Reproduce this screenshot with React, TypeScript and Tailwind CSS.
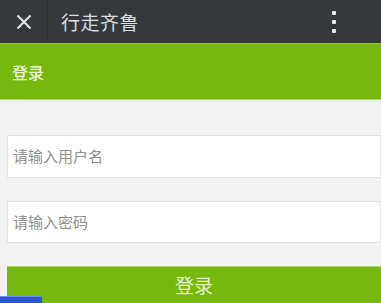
import React from "react";

export default function App() {
  const font = { fontFamily: '"Noto Sans CJK SC", "Noto Sans", sans-serif' };
  return (
    <div className="w-[381px] h-[303px] overflow-hidden bg-[#f2f2f2] relative" style={font}>
      <div className="h-[43px] bg-[#36393c] flex items-center">
        <div className="w-[47px] flex justify-center">
          <svg width="16" height="16" viewBox="0 0 16 16">
            <path d="M1.5 1.5 L14.5 14.5 M14.5 1.5 L1.5 14.5" stroke="#e4e4e4" strokeWidth="2" />
          </svg>
        </div>
        <div className="w-px h-[43px] bg-[#2e3134]" />
        <div className="ml-[13px] text-[19px] leading-none text-[#dcdcdc] tracking-[0.5px]">行走齐鲁</div>
        <div className="ml-auto mr-[45px] flex flex-col gap-[5px] pt-[1px]">
          <div className="w-[4px] h-[4px] bg-[#e8e8e8] rounded-[1px]" />
          <div className="w-[4px] h-[4px] bg-[#e8e8e8] rounded-[1px]" />
          <div className="w-[4px] h-[4px] bg-[#e8e8e8] rounded-[1px]" />
        </div>
      </div>
      <div className="h-[57px] bg-[#77b80e] border-t border-[#8fc83a] border-b border-b-[#a9d66a] flex items-center pl-[12px]">
        <span className="text-[16px] text-[#e9f5d0] font-medium">登录</span>
      </div>
      <div className="pl-[7px] pt-[35px]">
        <div className="h-[43px] bg-white border border-[#e3e3e3] flex items-center pl-[5px]">
          <span className="text-[15px] text-[#8f8f8f]">请输入用户名</span>
        </div>
        <div className="mt-[23px] h-[42px] bg-white border border-[#e3e3e3] flex items-center pl-[5px]">
          <span className="text-[15px] text-[#8f8f8f]">请输入密码</span>
        </div>
        <div className="mt-[23px] h-[40px] bg-[#77b80e] border-t border-[#a6d468] flex justify-center pt-[8px]">
          <span className="text-[19px] leading-none text-[#e4f1cc]">登录</span>
        </div>
      </div>
      <div className="absolute left-0 bottom-0 w-[42px] h-[7px] bg-[#2a58d0] border-t border-[#6a8fe8]" />
    </div>
  );
}
